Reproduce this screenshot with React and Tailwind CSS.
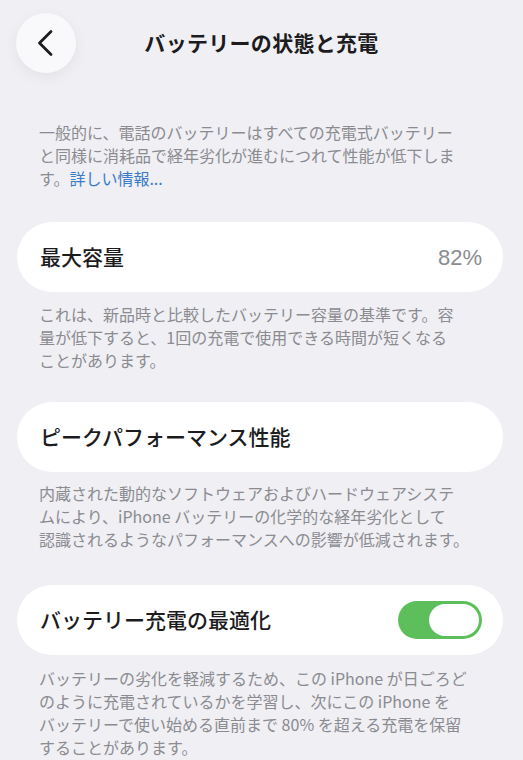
import React, { useState } from 'react';

const jp = { fontFamily: '"Noto Sans CJK JP", "Noto Sans", sans-serif' };

function Note({ lines, link }) {
  return (
    <p className="px-[39px] text-[16px] leading-[23px] text-[#8b8b90]">
      {lines.map((line, i) => (
        <span key={i} className="block whitespace-pre">
          {line}
          {link && i === lines.length - 1 && <span className="text-[#3a7bc8]">{link}</span>}
        </span>
      ))}
    </p>
  );
}

function Card({ children }) {
  return (
    <div className="ml-[17px] mr-[20px] flex h-[70px] items-center justify-between rounded-full bg-white pl-[23px] pr-[21px]">
      {children}
    </div>
  );
}

export default function BatteryHealth() {
  const [optimized, setOptimized] = useState(true);

  return (
    <div className="h-screen overflow-hidden bg-[#efeff4] pt-[13px]" style={jp}>
      <header className="grid grid-cols-[60px_1fr_60px] items-center px-[16px]">
        <button className="flex h-[60px] w-[60px] items-center justify-center rounded-full bg-[#f9f9fb] shadow-[0_4px_14px_rgba(0,0,0,0.06)]">
          <svg width="30" height="30" viewBox="0 0 30 30" fill="none" stroke="#1c1c1e" strokeWidth="2.8" strokeLinecap="round" strokeLinejoin="round">
            <path d="M20 3.5 L8.5 15 L20 26.5" />
          </svg>
        </button>
        <h1 className="text-center text-[21px] font-bold tracking-[0.3px] text-[#1c1c1e]">バッテリーの状態と充電</h1>
        <div />
      </header>

      <div className="mt-[48px]">
        <Note
          lines={[
            '一般的に、電話のバッテリーはすべての充電式バッテリー',
            'と同様に消耗品で経年劣化が進むにつれて性能が低下しま',
            'す。',
          ]}
          link="詳しい情報..."
        />
      </div>

      <div className="mt-[32px]">
        <Card>
          <span className="text-[21px] font-medium text-[#1c1c1e]">最大容量</span>
          <span className="text-[22px] text-[#8b8b90]" style={{ fontFamily: '"Liberation Sans", sans-serif' }}>82%</span>
        </Card>
      </div>
      <div className="mt-[11px]">
        <Note
          lines={[
            'これは、新品時と比較したバッテリー容量の基準です。容',
            '量が低下すると、1回の充電で使用できる時間が短くなる',
            'ことがあります。',
          ]}
        />
      </div>

      <div className="mt-[30px]">
        <Card>
          <span className="text-[21px] font-medium text-[#1c1c1e]">ピークパフォーマンス性能</span>
        </Card>
      </div>
      <div className="mt-[10px]">
        <Note
          lines={[
            '内蔵された動的なソフトウェアおよびハードウェアシステ',
            'ムにより、iPhone バッテリーの化学的な経年劣化として',
            '認識されるようなパフォーマンスへの影響が低減されます。',
          ]}
        />
      </div>

      <div className="mt-[34px]">
        <Card>
          <span className="text-[21px] font-medium text-[#1c1c1e]">バッテリー充電の最適化</span>
          <button
            onClick={() => setOptimized(!optimized)}
            className={`flex h-[38px] w-[84px] items-center rounded-full p-[3px] ${optimized ? 'justify-end bg-[#5cbf5b]' : 'justify-start bg-[#e4e4e8]'}`}
          >
            <span className="h-[32px] w-[50px] rounded-full bg-white" />
          </button>
        </Card>
      </div>
      <div className="mt-[12px]">
        <Note
          lines={[
            'バッテリーの劣化を軽減するため、この iPhone が日ごろど',
            'のように充電されているかを学習し、次にこの iPhone を',
            'バッテリーで使い始める直前まで 80% を超える充電を保留',
            'することがあります。',
          ]}
        />
      </div>
    </div>
  );
}
